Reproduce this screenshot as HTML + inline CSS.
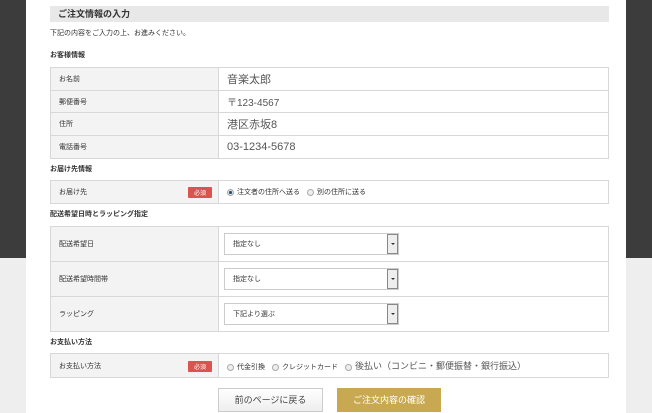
<!DOCTYPE html><html><head><meta charset="utf-8"><style>
*{box-sizing:border-box;margin:0;padding:0}
body{width:652px;height:413px;overflow:hidden;background:#eeeeee;font-family:"Liberation Sans","Noto Sans CJK JP",sans-serif;color:#333;position:relative}
.dark{position:absolute;left:0;top:0;width:652px;height:258px;background:#3c3c3c}
.panel{position:absolute;left:26px;top:0;width:600px;height:413px;background:#fff}
.a{position:absolute}
.hd{left:50px;top:6px;width:559px;height:16px;background:#e8e8e8;font-size:9px;font-weight:bold;line-height:16px;padding-left:8px}
.t{font-size:7px}
.b{font-size:7px;font-weight:bold}
table{position:absolute;left:50px;width:559px;border-collapse:collapse}
td{border:1px solid #d8d8d8;font-size:7px;padding:0 8px}
td.l{background:#f3f3f3;width:168px;position:relative}
.req{position:absolute;right:6px;top:50%;margin-top:-5px;background:#d9534f;color:#fff;font-size:6px;padding:1px 6px;border-radius:1px}
.v{font-size:11px;color:#555}
.sel{display:flex;align-items:center;width:175px;height:22px;border:1px solid #ccc;position:relative;padding-left:8px;font-size:7px}
.sel i{position:absolute;right:0;top:0;width:11px;height:20px;background:#eee;border:1px solid #888}
.sel i:after{content:"";position:absolute;left:3px;top:8px;border:2px solid transparent;border-top:2px solid #333}
.r{display:inline-block;width:7px;height:7px;border-radius:50%;border:1px solid #aaa;background:#eee;vertical-align:middle;margin-right:3px}
.r.on{background:radial-gradient(#1c4f8a 40%,#ddd 50%)}
</style></head><body>
<div class="dark"></div><div class="panel"></div>
<div class="a hd">ご注文情報の入力</div>
<div class="a t" style="left:50px;top:28px">下記の内容をご入力の上、お進みください。</div>
<div class="a b" style="left:50px;top:50px">お客様情報</div>
<table style="top:67px">
<tr style="height:23px"><td class="l">お名前</td><td class="v">音楽太郎</td></tr>
<tr style="height:22px"><td class="l">郵便番号</td><td class="v" style="font-size:10px">〒123-4567</td></tr>
<tr style="height:23px"><td class="l">住所</td><td class="v">港区赤坂8</td></tr>
<tr style="height:23px"><td class="l">電話番号</td><td class="v">03-1234-5678</td></tr>
</table>
<div class="a b" style="left:50px;top:164px">お届け先情報</div>
<table style="top:180px">
<tr style="height:23px"><td class="l">お届け先<span class="req">必須</span></td><td><span class="r on"></span>注文者の住所へ送る　<span class="r"></span>別の住所に送る</td></tr>
</table>
<div class="a b" style="left:50px;top:209px">配送希望日時とラッピング指定</div>
<table style="top:226px">
<tr style="height:35px"><td class="l">配送希望日</td><td style="padding-left:5px"><span class="sel">指定なし<i></i></span></td></tr>
<tr style="height:35px"><td class="l">配送希望時間帯</td><td style="padding-left:5px"><span class="sel">指定なし<i></i></span></td></tr>
<tr style="height:35px"><td class="l">ラッピング</td><td style="padding-left:5px"><span class="sel">下記より選ぶ<i></i></span></td></tr>
</table>
<div class="a b" style="left:50px;top:337px">お支払い方法</div>
<table style="top:353px">
<tr style="height:24px"><td class="l">お支払い方法<span class="req">必須</span></td><td><span class="r"></span>代金引換　<span class="r"></span>クレジットカード　<span class="r"></span><span style="font-size:9px;color:#555">後払い（コンビニ・郵便振替・銀行振込）</span></td></tr>
</table>
<div class="a" style="left:218px;top:388px;width:105px;height:24px;border:1px solid #ccc;background:linear-gradient(#fff,#eee);font-size:9px;text-align:center;line-height:22px;color:#444">前のページに戻る</div>
<div class="a" style="left:337px;top:388px;width:104px;height:24px;background:#c8a951;font-size:9px;text-align:center;line-height:24px;color:#fff">ご注文内容の確認</div>
</body></html>
